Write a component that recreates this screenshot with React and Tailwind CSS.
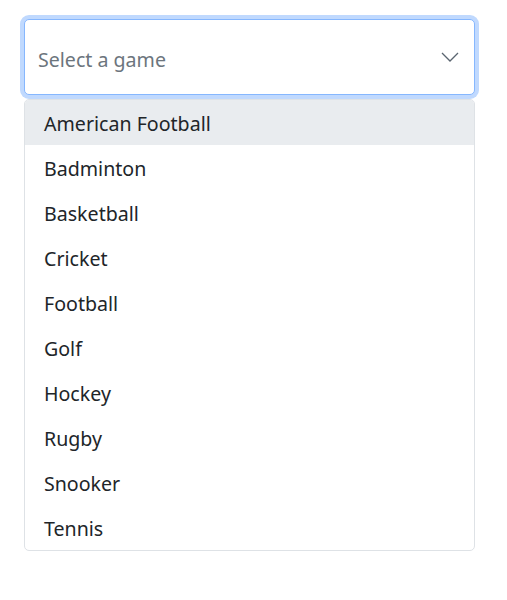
import React from "react";

const games = ["American Football","Badminton","Basketball","Cricket","Football","Golf","Hockey","Rugby","Snooker","Tennis"];

export default function App() {
  return (
    <div className="bg-white w-[507px] h-[600px] pt-[19px] pl-[24px]" style={{fontFamily: '"Segoe UI", "Noto Sans", "Open Sans", sans-serif'}}>
      <div className="w-[451px]">
        <div className="h-[76px] flex items-center justify-between rounded-[5px] border border-[#86b7fe] bg-white shadow-[0_0_0_4px_#c0d9fe] pl-[13px] pr-[15px]">
          <span className="text-[19.6px] text-[#6c757d] pt-[5px]">Select a game</span>
          <svg width="18" height="10" viewBox="0 0 18 10" fill="none" className="mt-[-1px]">
            <path d="M1 1 L9 9 L17 1" stroke="#5a6570" strokeWidth="1.3" />
          </svg>
        </div>
        <div className="mt-[4px] border border-[#dee2e6] rounded-[5px] bg-white overflow-hidden">
          {games.map((g, i) => (
            <div key={g} className={`h-[45px] flex items-center pl-[19px] pt-[2px] text-[19.6px] text-[#212529] ${i === 0 ? "bg-[#e9ecef]" : ""}`}>
              {g}
            </div>
          ))}
        </div>
      </div>
    </div>
  );
}
